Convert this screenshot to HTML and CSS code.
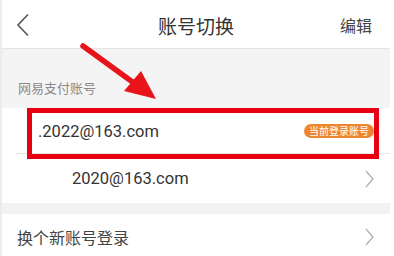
FILE: index.html
```html
<!DOCTYPE html>
<html lang="zh-CN">
<head>
<meta charset="utf-8">
<title>账号切换</title>
<link rel="stylesheet" href="styles.css">
</head>
<body>
<div class="app">
  <header class="top">
    <svg class="back" width="14" height="24" viewBox="0 0 14 24"><path d="M12 1.5 L2 12 L12 22.5" fill="none" stroke="#555" stroke-width="1.6"/></svg>
    <h1 class="title">账号切换</h1>
    <span class="edit">编辑</span>
  </header>
  <div class="section-label">网易支付账号</div>
  <div class="list">
    <div class="row row-current">
      <span class="email email-current">.2022@163.com</span>
      <span class="badge">当前登录账号</span>
    </div>
    <div class="row row-other">
      <span class="email email-other">2020@163.com</span>
      <svg class="chev" width="9" height="18" viewBox="0 0 9 18"><path d="M1 1 L8 9 L1 17" fill="none" stroke="#b0b0b0" stroke-width="1.3"/></svg>
    </div>
  </div>
  <div class="gap"></div>
  <div class="list">
    <div class="row row-new">
      <span class="new-text">换个新账号登录</span>
      <svg class="chev" width="9" height="18" viewBox="0 0 9 18"><path d="M1 1 L8 9 L1 17" fill="none" stroke="#b0b0b0" stroke-width="1.3"/></svg>
    </div>
  </div>
  <div class="highlight"></div>
  <svg class="arrow" width="394" height="256" viewBox="0 0 394 256">
    <line x1="83" y1="46" x2="138" y2="86" stroke="#e8141a" stroke-width="5.5" stroke-linecap="round"/>
    <polygon points="156,99 124,91 141,71" fill="#e8141a"/>
  </svg>
</div>
</body>
</html>
```
FILE: styles.css
```css
* { box-sizing: border-box; }
html, body { margin: 0; padding: 0; }
body {
  width: 394px;
  height: 256px;
  overflow: hidden;
  background: #ffffff;
  font-family: Roboto, "Noto Sans CJK SC", sans-serif;
}
.app {
  position: relative;
  width: 390px;
  height: 256px;
  border-left: 2px solid #ececec;
  background: #f4f4f4;
}
.top {
  height: 49px;
  background: #fff;
  border-bottom: 1px solid #e4e4e4;
  display: flex;
  align-items: center;
  justify-content: space-between;
  padding: 0 18px 0 14px;
  position: relative;
}
.back { display: block; margin-top: 2px; }
.title {
  position: absolute;
  left: 0;
  right: 0;
  top: 0;
  margin: 0;
  text-align: center;
  line-height: 52px;
  font-size: 19px;
  font-weight: 400;
  color: #333;
  font-family: "Noto Sans CJK SC", sans-serif;
  pointer-events: none;
}
.edit {
  font-size: 16px;
  color: #444;
  font-family: "Noto Sans CJK SC", sans-serif;
  margin-top: 2px;
  position: relative;
}
.section-label {
  height: 59px;
  padding: 30px 0 0 16px;
  line-height: 18px;
  font-size: 13px;
  color: #8a8a8a;
  font-family: "Noto Sans CJK SC", sans-serif;
}
.list { background: #fff; }
.row {
  display: flex;
  align-items: center;
  justify-content: space-between;
  padding-right: 16px;
}
.row-current {
  height: 46px;
  padding-left: 36px;
  position: relative;
}
.row-current::after {
  content: "";
  position: absolute;
  left: 14px;
  right: 0;
  bottom: 0;
  border-bottom: 1px solid #e6e6e6;
}
.row-other {
  height: 49px;
  padding-left: 70px;
}
.email {
  font-size: 16.5px;
  color: #333;
}
.email-other { margin-top: -1px; }
.badge {
  height: 14px;
  line-height: 14px;
  padding: 0 5px;
  border-radius: 7px;
  background: #ee8630;
  color: #fff;
  font-size: 10px;
  font-family: "Noto Sans CJK SC", sans-serif;
}
.chev { display: block; }
.gap { height: 11px; background: #f2f2f2; }
.row-new {
  height: 46px;
  padding-left: 15px;
}
.new-text {
  font-size: 16px;
  color: #444;
  font-family: "Noto Sans CJK SC", sans-serif;
}
.highlight {
  position: absolute;
  left: 25px;
  top: 108px;
  width: 352px;
  height: 51px;
  border: 5px solid #e60012;
}
.arrow {
  position: absolute;
  left: -2px;
  top: 0;
}
```
